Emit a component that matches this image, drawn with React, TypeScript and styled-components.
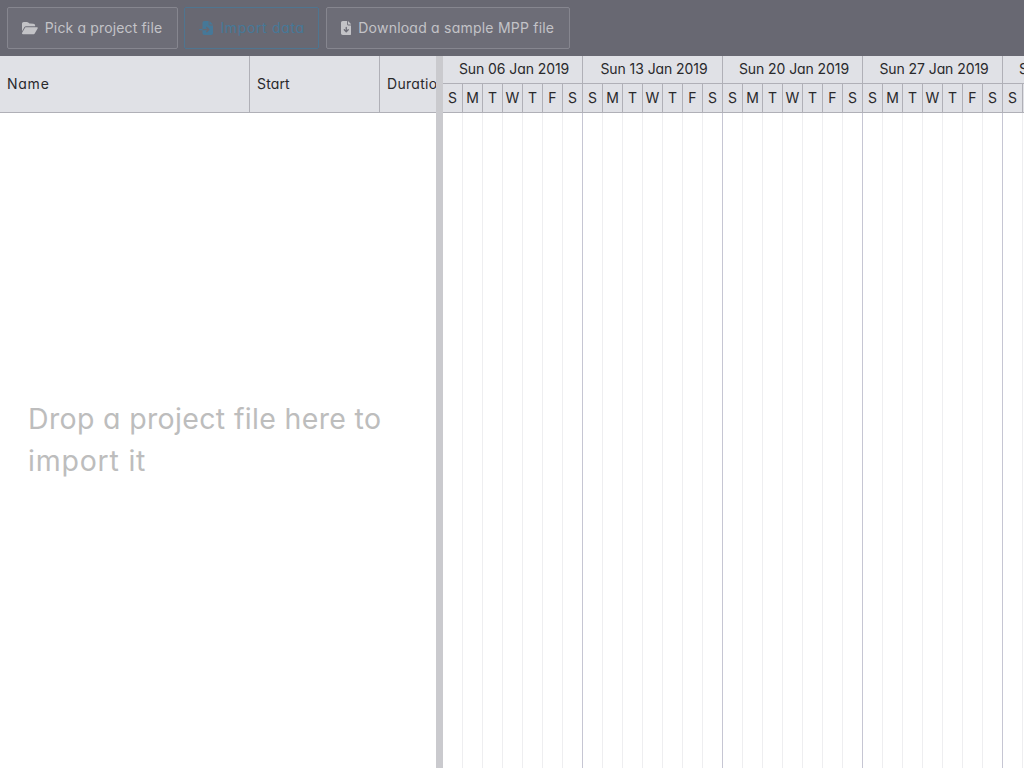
import React from 'react';
import styled, { createGlobalStyle } from 'styled-components';
import { FaFolderOpen, FaFileImport, FaFileArrowDown } from 'react-icons/fa6';

const GlobalStyle = createGlobalStyle`
  * { box-sizing: border-box; }
  body {
    margin: 0;
    overflow: hidden;
    font-family: Inter, 'Open Sans', sans-serif;
    font-feature-settings: 'cv11', 'ss03';
    font-size: 14px;
    color: #29292c;
    background: #fff;
  }
`;

const Page = styled.div`
  display: flex;
  flex-direction: column;
  width: 100vw;
  height: 100vh;
  overflow: hidden;
`;

const Toolbar = styled.header`
  display: flex;
  flex: none;
  gap: 6.4px;
  height: 56px;
  padding: 7px;
  background: #686872;
`;

const ToolButton = styled.button<{ $width: number; $iconWidth: number }>`
  display: flex;
  align-items: center;
  flex: none;
  gap: 7px;
  width: ${(p) => p.$width}px;
  height: 42px;
  padding: 0 0 0 14px;
  border: 1px solid #86868f;
  border-radius: 2px;
  background: #6d6d77;
  color: #c3c3c7;
  font: inherit;
  white-space: nowrap;

  &:disabled {
    border-color: #4f7590;
    background: transparent;
    color: #467898;
  }

  svg {
    flex: none;
    width: ${(p) => p.$iconWidth}px;
    height: 14px;
    margin-bottom: 1px;
  }
`;

const Label = styled.span<{ $spacing?: number }>`
  padding-bottom: 2px;
  letter-spacing: ${(p) => p.$spacing ?? 0}px;
  white-space: nowrap;
`;

const Gantt = styled.main`
  display: flex;
  flex: 1;
  min-height: 0;
`;

const TaskPane = styled.section`
  display: flex;
  flex-direction: column;
  flex: none;
  width: 436px;
  overflow: hidden;
`;

const ColumnHeaders = styled.div`
  display: flex;
  flex: none;
  height: 57px;
  border-bottom: 1px solid #b0b0b7;
  background: #e0e1e6;
`;

const ColumnHeader = styled.div<{ $width: number }>`
  display: flex;
  align-items: center;
  flex: none;
  width: ${(p) => p.$width}px;
  padding: 0 7px;
  border-right: 1px solid #b0b0b7;
`;

const DropArea = styled.div`
  display: flex;
  flex-direction: column;
  justify-content: center;
  flex: 1;
  padding: 0 28px 2px;
  color: #bdbdbd;
  font-size: 28.5px;
  line-height: 42px;
`;

const DropLine = styled.span<{ $spacing: number }>`
  letter-spacing: ${(p) => p.$spacing}px;
  white-space: nowrap;
`;

const Splitter = styled.div`
  flex: none;
  width: 7px;
  background: #cacace;
`;

const Timeline = styled.section`
  display: flex;
  flex: 1;
  min-width: 0;
  overflow: hidden;
`;

const Week = styled.div`
  display: flex;
  flex-direction: column;
  flex: none;
  width: 140px;
`;

const WeekTitle = styled.div`
  display: flex;
  align-items: center;
  justify-content: center;
  flex: none;
  height: 28px;
  padding-left: 3px;
  border-right: 1px solid #b0b0b7;
  border-bottom: 1px solid #b0b0b7;
  background: #e0e1e6;
`;

const Days = styled.div`
  display: flex;
  flex: 1;
`;

const Day = styled.div<{ $last: boolean }>`
  flex: none;
  width: 20px;
  border-right: 1px solid ${(p) => (p.$last ? '#c6c6d3' : '#eeeef0')};
`;

const DayName = styled.div`
  display: flex;
  align-items: center;
  justify-content: center;
  width: 20px;
  height: 29px;
  padding-bottom: 2px;
  border-right: 1px solid #b0b0b7;
  border-bottom: 1px solid #b0b0b7;
  background: #e0e1e6;
`;

const weeks = ['Sun 06 Jan 2019', 'Sun 13 Jan 2019', 'Sun 20 Jan 2019', 'Sun 27 Jan 2019', 'Sun 03 Feb 2019'];
const dayNames = ['S', 'M', 'T', 'W', 'T', 'F', 'S'];

export default function App() {
  return (
    <Page>
      <GlobalStyle />
      <Toolbar>
        <ToolButton $width={171} $iconWidth={15.75}><FaFolderOpen /><Label $spacing={0.15}>Pick a project file</Label></ToolButton>
        <ToolButton $width={135} $iconWidth={14} disabled><FaFileImport /><Label $spacing={0.65}>Import data</Label></ToolButton>
        <ToolButton $width={244} $iconWidth={10.5}><FaFileArrowDown /><Label $spacing={0.22}>Download a sample MPP file</Label></ToolButton>
      </Toolbar>
      <Gantt>
        <TaskPane>
          <ColumnHeaders>
            <ColumnHeader $width={250}><Label $spacing={0.75}>Name</Label></ColumnHeader>
            <ColumnHeader $width={130}><Label $spacing={0.15}>Start</Label></ColumnHeader>
            <ColumnHeader $width={100}><Label $spacing={0.3}>Duration</Label></ColumnHeader>
          </ColumnHeaders>
          <DropArea>
            <DropLine $spacing={0.34}>Drop a project file here to</DropLine>
            <DropLine $spacing={0.78}>import it</DropLine>
          </DropArea>
        </TaskPane>
        <Splitter />
        <Timeline>
          {weeks.map((week) => (
            <Week key={week}>
              <WeekTitle><Label $spacing={-0.08}>{week}</Label></WeekTitle>
              <Days>
                {dayNames.map((name, i) => (
                  <Day key={i} $last={i === 6}><DayName>{name}</DayName></Day>
                ))}
              </Days>
            </Week>
          ))}
        </Timeline>
      </Gantt>
    </Page>
  );
}
